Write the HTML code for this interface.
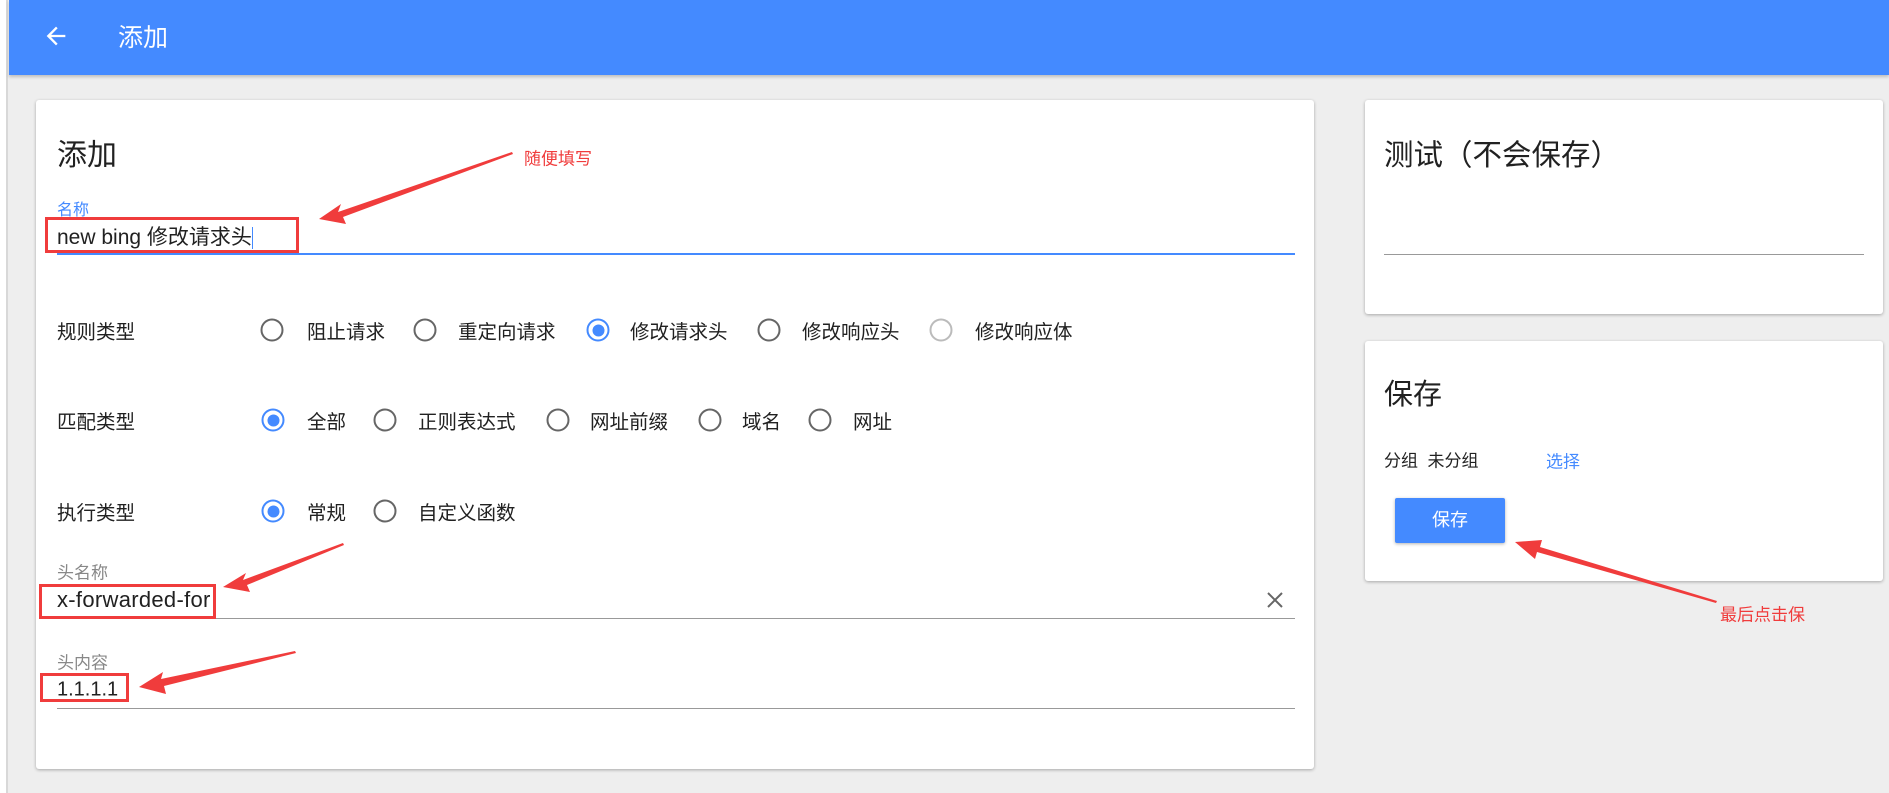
<!DOCTYPE html>
<html><head><meta charset="utf-8"><style>
*{margin:0;padding:0;box-sizing:border-box}
body{width:1889px;height:793px;background:#eeeeee;position:relative;overflow:hidden;font-family:"Liberation Sans","Noto Sans CJK SC",sans-serif;color:#212121}
.a{position:absolute;white-space:nowrap}
.card{position:absolute;background:#fff;border-radius:3px;box-shadow:0 1px 3px rgba(0,0,0,.3)}
.t{transform:translateY(-50%)}
.r{position:absolute;width:23px;height:23px;border:2px solid #666;border-radius:50%;transform:translate(-50%,-50%)}
.r.on{border-color:#448aff}
.r.on::after{content:"";position:absolute;left:3.5px;top:3.5px;width:12px;height:12px;border-radius:50%;background:#448aff}
.r.dis{border-color:#bbb}
.lab{font-size:19.5px}
.box{position:absolute;border:3px solid #f03c3c}
.red{color:#f03c3c}
</style></head><body>
<div class="a" style="left:0;top:0;width:8px;height:793px;background:#fff;border-right:2px solid #d8d8d8"></div>
<div class="a" style="left:9px;top:0;width:1880px;height:75px;background:#448aff;box-shadow:0 2px 3px rgba(0,0,0,.2)"></div>
<svg class="a" style="left:42px;top:22px" width="28" height="28" viewBox="0 0 24 24"><path d="M20 11H7.83l5.59-5.59L12 4l-8 8 8 8 1.41-1.41L7.83 13H20v-2z" fill="#fff"/></svg>
<div class="a t" style="left:118px;top:36px;font-size:25px;color:#fff">添加</div>

<div class="card" style="left:36px;top:100px;width:1278px;height:669px"></div>
<div class="a t" style="left:57px;top:152px;font-size:30px">添加</div>
<div class="a t" style="left:57px;top:208px;font-size:16px;color:#448aff">名称</div>
<div class="a t" style="left:57px;top:236px;font-size:21px">new bing 修改请求头<span style="display:inline-block;width:1px;height:22px;background:#448aff;vertical-align:middle"></span></div>
<div class="a" style="left:57px;top:253px;width:1238px;height:2px;background:#448aff"></div>
<div class="box" style="left:45px;top:217px;width:254px;height:36px"></div>
<div class="a t red" style="left:524px;top:157px;font-size:17px">随便填写</div>

<div class="a t lab" style="left:57px;top:330px">规则类型</div>
<div class="r" style="left:272px;top:330px"></div><div class="a t lab" style="left:307px;top:330px">阻止请求</div>
<div class="r" style="left:425px;top:330px"></div><div class="a t lab" style="left:458px;top:330px">重定向请求</div>
<div class="r on" style="left:598px;top:330px"></div><div class="a t lab" style="left:630px;top:330px">修改请求头</div>
<div class="r" style="left:769px;top:330px"></div><div class="a t lab" style="left:802px;top:330px">修改响应头</div>
<div class="r dis" style="left:941px;top:330px"></div><div class="a t lab" style="left:975px;top:330px">修改响应体</div>

<div class="a t lab" style="left:57px;top:420px">匹配类型</div>
<div class="r on" style="left:273px;top:420px"></div><div class="a t lab" style="left:307px;top:420px">全部</div>
<div class="r" style="left:385px;top:420px"></div><div class="a t lab" style="left:418px;top:420px">正则表达式</div>
<div class="r" style="left:558px;top:420px"></div><div class="a t lab" style="left:590px;top:420px">网址前缀</div>
<div class="r" style="left:710px;top:420px"></div><div class="a t lab" style="left:742px;top:420px">域名</div>
<div class="r" style="left:820px;top:420px"></div><div class="a t lab" style="left:853px;top:420px">网址</div>

<div class="a t lab" style="left:57px;top:511px">执行类型</div>
<div class="r on" style="left:273px;top:511px"></div><div class="a t lab" style="left:307px;top:511px">常规</div>
<div class="r" style="left:385px;top:511px"></div><div class="a t lab" style="left:418px;top:511px">自定义函数</div>

<div class="a t" style="left:57px;top:571px;font-size:17px;color:#888">头名称</div>
<div class="a t" style="left:57px;top:600px;font-size:22px;letter-spacing:0.3px">x-forwarded-for</div>
<div class="a" style="left:57px;top:618px;width:1238px;height:1px;background:#999"></div>
<svg class="a" style="left:1266px;top:591px" width="18" height="18" viewBox="0 0 18 18"><path d="M2 2L16 16M16 2L2 16" stroke="#666" stroke-width="2"/></svg>
<div class="box" style="left:39px;top:584px;width:177px;height:35px"></div>

<div class="a t" style="left:57px;top:661px;font-size:17px;color:#888">头内容</div>
<div class="a t" style="left:57px;top:690px;font-size:20px">1.1.1.1</div>
<div class="a" style="left:57px;top:708px;width:1238px;height:1px;background:#999"></div>
<div class="box" style="left:40px;top:673px;width:89px;height:29px"></div>

<div class="card" style="left:1365px;top:100px;width:518px;height:214px"></div>
<div class="a t" style="left:1384px;top:153px;font-size:29.5px">测试（不会保存）</div>
<div class="a" style="left:1384px;top:254px;width:480px;height:1px;background:#999"></div>

<div class="card" style="left:1365px;top:341px;width:518px;height:240px"></div>
<div class="a t" style="left:1384px;top:392px;font-size:29px">保存</div>
<div class="a t" style="left:1384px;top:459px;font-size:17px">分组&nbsp;&nbsp;未分组</div>
<div class="a t" style="left:1546px;top:460px;font-size:17px;color:#448aff">选择</div>
<div class="a" style="left:1395px;top:498px;width:110px;height:45px;background:#448aff;border-radius:2px;box-shadow:0 1px 3px rgba(0,0,0,.3);color:#fff;font-size:18px;text-align:center;line-height:45px">保存</div>
<div class="a t red" style="left:1720px;top:613px;font-size:17px">最后点击保</div>

<svg class="a" style="left:0;top:0" width="1889" height="793">
<g fill="#f03c3c">
<polygon points="512,152 338,212 341,204 319,219 346,224 343,217 513,154"/>
<polygon points="343,543 243,580 246,573 223,587 250,592 247,585 344,545"/>
<polygon points="295,651 161,679 163,672 139,687 166,694 164,686 296,653"/>
<polygon points="1717,601 1540,547 1542,540 1515,542 1535,559 1537,552 1716,603"/>
</g>
</svg>
</body></html>
